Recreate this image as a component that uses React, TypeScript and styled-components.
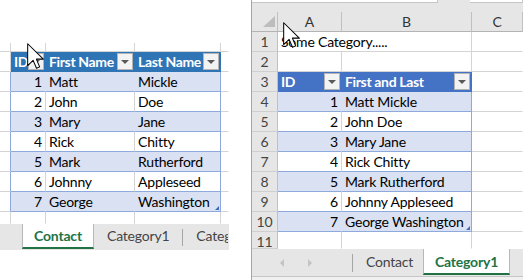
import React from "react";
import styled, { createGlobalStyle } from "styled-components";

const GRID = "#d4d4d4";
const TABLE_LINE = "#8ea9db";
const BAND = "#d9e1f2";
const HDR_GRAY = "#e6e6e6";
const HDR_LINE = "#c0c0c0";
const EXCEL_GREEN = "#217346";

const GlobalStyle = createGlobalStyle`
  html, body {
    margin: 0;
    padding: 0;
    background: #fff;
  }
  body {
    font-family: Lato, "Liberation Sans", sans-serif;
  }
`;

const Page = styled.div`
  position: relative;
  display: flex;
  width: 523px;
  height: 280px;
  overflow: hidden;
  background: #fff;
`;

const LeftPanel = styled.section`
  width: 229px;
  display: flex;
  flex-direction: column;
  overflow: hidden;
`;

const Gutter = styled.div`
  width: 22px;
`;

const RightPanel = styled.section`
  flex: 1;
  display: flex;
  flex-direction: column;
  border-left: 1px solid #a6a6a6;
  background: ${HDR_GRAY};
`;

const TopSpace = styled.div`
  height: 43px;
`;

const FormulaStrip = styled.div`
  display: flex;
  gap: 32px;
  height: 12px;
`;

const FormulaBox = styled.div<{ $w?: number }>`
  ${(p) => (p.$w ? `width: ${p.$w}px;` : "flex: 1;")}
  height: 2px;
  background: #fff;
  border-bottom: 1px solid #c6c6c6;
  border-right: 1px solid #c6c6c6;
`;

const Row = styled.div<{ $cols: string; $h: number }>`
  display: grid;
  grid-template-columns: ${(p) => p.$cols};
  height: ${(p) => p.$h}px;
`;

const Cell = styled.div<{
  $bg?: string;
  $rb?: string;
  $bb?: string;
  $align?: "left" | "right" | "center";
  $span?: number;
}>`
  position: relative;
  box-sizing: border-box;
  min-width: 0;
  overflow: hidden;
  background: ${(p) => p.$bg ?? "#fff"};
  border-right: 1px solid ${(p) => p.$rb ?? p.$bg ?? "#fff"};
  border-bottom: 1px solid ${(p) => p.$bb ?? p.$bg ?? "#fff"};
  padding: 0 3px;
  font-size: 14px;
  letter-spacing: -0.2px;
  line-height: 19px;
  text-align: ${(p) => p.$align ?? "left"};
  white-space: nowrap;
  color: #000;
  ${(p) => (p.$span ? `grid-column: span ${p.$span};` : "")}
`;

const HeadCell = styled(Cell)`
  display: flex;
  align-items: center;
  justify-content: space-between;
  padding-right: 1px;
  color: #fff;
  font-weight: 700;
  letter-spacing: -0.35px;
`;

const DropButton = styled.span`
  position: relative;
  flex: none;
  width: 14px;
  height: 15px;
  background: #f3f3f3;
  border: 1px solid #b4b4b4;

  &::after {
    content: "";
    position: absolute;
    left: 3px;
    top: 6px;
    border-left: 4px solid transparent;
    border-right: 4px solid transparent;
    border-top: 4px solid #595959;
  }
`;

const ResizeMark = styled.span`
  position: absolute;
  right: 1px;
  bottom: 1px;
  width: 0;
  height: 0;
  border-left: 4px solid transparent;
  border-bottom: 4px solid #3d6bc0;
`;

const RowHead = styled(Cell)`
  background: ${HDR_GRAY};
  border-right-color: ${HDR_LINE};
  border-bottom-color: #cfcfcf;
  text-align: center;
  color: #444;
  padding: 0;
  letter-spacing: 0;
`;

const ColHead = styled(Cell)`
  background: ${HDR_GRAY};
  border-right-color: ${HDR_LINE};
  border-bottom-color: #b4b4b4;
  text-align: center;
  color: #333;
  line-height: 20px;
`;

const Corner = styled(ColHead)`
  &::after {
    content: "";
    position: absolute;
    right: 2px;
    bottom: 4px;
    width: 0;
    height: 0;
    border-left: 12px solid transparent;
    border-bottom: 11px solid #bdbdbd;
  }
`;

const TabBar = styled.div<{ $h: number }>`
  display: flex;
  align-items: stretch;
  height: ${(p) => p.$h}px;
  background: ${HDR_GRAY};
  font-size: 14px;
  letter-spacing: -0.2px;
  color: #444;
  overflow: hidden;
  white-space: nowrap;
`;

const TabLead = styled.div<{ $w: number }>`
  flex: none;
  width: ${(p) => p.$w}px;
`;

const SheetTab = styled.div<{ $active?: boolean; $w?: number; $clip?: boolean }>`
  flex: ${(p) => (p.$clip ? "1" : "none")};
  min-width: 0;
  overflow: hidden;
  box-sizing: border-box;
  display: flex;
  align-items: center;
  justify-content: ${(p) => (p.$active ? "center" : "flex-start")};
  ${(p) => (p.$w ? `width: ${p.$w}px;` : "")}
  padding: ${(p) => (p.$clip ? "0 0 0 12px" : "0 12px")};
  background: ${(p) => (p.$active ? "#fff" : "transparent")};
  color: ${(p) => (p.$active ? EXCEL_GREEN : "#444")};
  font-weight: ${(p) => (p.$active ? 700 : 400)};
  border-left: 1px solid ${(p) => (p.$active ? "#b8b8b8" : "transparent")};
  border-right: 1px solid ${(p) => (p.$active ? "#b8b8b8" : "transparent")};
  border-bottom: 2px solid ${(p) => (p.$active ? EXCEL_GREEN : "transparent")};
  margin-bottom: 1px;
`;

const TabDivider = styled.div`
  flex: none;
  width: 1px;
  margin: 5px 0 4px;
  background: #a6a6a6;
`;

const NavArea = styled.div`
  flex: none;
  width: 100px;
  display: flex;
  align-items: center;
  gap: 24px;
  padding-left: 28px;
  box-sizing: border-box;
`;

const NavArrow = styled.span<{ $dir: "left" | "right" }>`
  width: 0;
  height: 0;
  border-top: 4px solid transparent;
  border-bottom: 4px solid transparent;
  ${(p) =>
    p.$dir === "left"
      ? "border-right: 4px solid #c4c4c4;"
      : "border-left: 4px solid #c4c4c4;"}
`;

const BottomStrip = styled.div`
  flex: 1;
  background: #f0f0f0;
  border-top: 1px solid #c6c6c6;
`;

const WhiteFill = styled.div`
  flex: 1;
  background: #fff;
`;

const CursorSvg = styled.svg<{ $x: number; $y: number }>`
  position: absolute;
  left: ${(p) => p.$x}px;
  top: ${(p) => p.$y}px;
  overflow: visible;
`;

const Cursor: React.FC<{ x: number; y: number }> = ({ x, y }) => (
  <CursorSvg $x={x} $y={y} width="17" height="26" viewBox="0 0 12.5 19">
    <path
      d="M0.5 0.5 L0.5 16.5 L4.5 12.7 L7 18.5 L9.3 17.5 L6.9 11.8 L12 11.8 Z"
      fill="#fff"
      stroke="#000"
      strokeWidth="0.75"
      strokeLinejoin="round"
    />
  </CursorSvg>
);

const people = [
  { id: 1, first: "Matt", last: "Mickle" },
  { id: 2, first: "John", last: "Doe" },
  { id: 3, first: "Mary", last: "Jane" },
  { id: 4, first: "Rick", last: "Chitty" },
  { id: 5, first: "Mark", last: "Rutherford" },
  { id: 6, first: "Johnny", last: "Appleseed" },
  { id: 7, first: "George", last: "Washington" },
];

const LEFT_COLS = "11px 35px 89px 86px 8px";
const RIGHT_COLS = "26px 64px 130px 51px";

const ContactSheet: React.FC = () => (
  <LeftPanel>
    <TopSpace />
    <Row $cols={LEFT_COLS} $h={9}>
      <Cell $rb={GRID} $bb={GRID} />
      <Cell $rb={GRID} $bb={GRID} />
      <Cell $rb={GRID} $bb={GRID} />
      <Cell $rb={GRID} $bb={GRID} />
      <Cell $bb={GRID} />
    </Row>
    <Row $cols={LEFT_COLS} $h={20}>
      <Cell $rb={GRID} $bb={GRID} />
      <HeadCell $bg="#2f75b5">
        ID
        <DropButton />
      </HeadCell>
      <HeadCell $bg="#2f75b5">
        First Name
        <DropButton />
      </HeadCell>
      <HeadCell $bg="#2f75b5">
        Last Name
        <DropButton />
      </HeadCell>
      <Cell $bb={GRID} />
    </Row>
    {people.map((p, i) => {
      const band = i % 2 === 0;
      const bg = band ? BAND : "#fff";
      const inner = band ? BAND : GRID;
      return (
        <Row key={p.id} $cols={LEFT_COLS} $h={20}>
          <Cell $rb={TABLE_LINE} $bb={GRID} />
          <Cell $bg={bg} $rb={inner} $bb={TABLE_LINE} $align="right">
            {p.id}
          </Cell>
          <Cell $bg={bg} $rb={inner} $bb={TABLE_LINE}>
            {p.first}
          </Cell>
          <Cell $bg={bg} $rb={TABLE_LINE} $bb={TABLE_LINE}>
            {p.last}
            {i === people.length - 1 && <ResizeMark />}
          </Cell>
          <Cell $bb={GRID} />
        </Row>
      );
    })}
    <Row $cols={LEFT_COLS} $h={12}>
      <Cell $rb={GRID} />
      <Cell $rb={GRID} />
      <Cell $rb={GRID} />
      <Cell $rb={GRID} />
      <Cell />
    </Row>
    <TabBar $h={26}>
      <TabLead $w={22} />
      <SheetTab $active $w={72}>
        Contact
      </SheetTab>
      <SheetTab>Category1</SheetTab>
      <TabDivider />
      <SheetTab $clip>Category2</SheetTab>
    </TabBar>
    <WhiteFill />
  </LeftPanel>
);

const CategorySheet: React.FC = () => (
  <RightPanel>
    <FormulaStrip>
      <FormulaBox $w={185} />
      <FormulaBox />
    </FormulaStrip>
    <Row $cols={RIGHT_COLS} $h={20}>
      <Corner />
      <ColHead>A</ColHead>
      <ColHead>B</ColHead>
      <ColHead>C</ColHead>
    </Row>
    <Row $cols={RIGHT_COLS} $h={20}>
      <RowHead>1</RowHead>
      <Cell $span={2} $rb={GRID} $bb={GRID}>
        Some Category.....
      </Cell>
      <Cell $bb={GRID} />
    </Row>
    <Row $cols={RIGHT_COLS} $h={20}>
      <RowHead>2</RowHead>
      <Cell $rb={GRID} $bb={GRID} />
      <Cell $rb={GRID} $bb={GRID} />
      <Cell $bb={GRID} />
    </Row>
    <Row $cols={RIGHT_COLS} $h={20}>
      <RowHead>3</RowHead>
      <HeadCell $bg="#4472c4">
        ID
        <DropButton />
      </HeadCell>
      <HeadCell $bg="#4472c4">
        First and Last
        <DropButton />
      </HeadCell>
      <Cell $bb={GRID} />
    </Row>
    {people.map((p, i) => {
      const band = i % 2 === 0;
      const bg = band ? BAND : "#fff";
      return (
        <Row key={p.id} $cols={RIGHT_COLS} $h={20}>
          <RowHead>{i + 4}</RowHead>
          <Cell $bg={bg} $rb={band ? BAND : GRID} $bb={TABLE_LINE} $align="right">
            {p.id}
          </Cell>
          <Cell $bg={bg} $rb={TABLE_LINE} $bb={TABLE_LINE}>
            {p.first} {p.last}
            {i === people.length - 1 && <ResizeMark />}
          </Cell>
          <Cell $bb={GRID} />
        </Row>
      );
    })}
    <Row $cols={RIGHT_COLS} $h={17}>
      <RowHead>11</RowHead>
      <Cell $rb={GRID} />
      <Cell $rb={GRID} />
      <Cell />
    </Row>
    <TabBar $h={27}>
      <NavArea>
        <NavArrow $dir="left" />
        <NavArrow $dir="right" />
      </NavArea>
      <TabDivider />
      <SheetTab $w={70}>Contact</SheetTab>
      <SheetTab $active $w={87}>
        Category1
      </SheetTab>
    </TabBar>
    <BottomStrip />
  </RightPanel>
);

const App: React.FC = () => (
  <>
    <GlobalStyle />
    <Page>
      <ContactSheet />
      <Gutter />
      <CategorySheet />
      <Cursor x={27} y={43} />
      <Cursor x={283} y={22} />
    </Page>
  </>
);

export default App;
